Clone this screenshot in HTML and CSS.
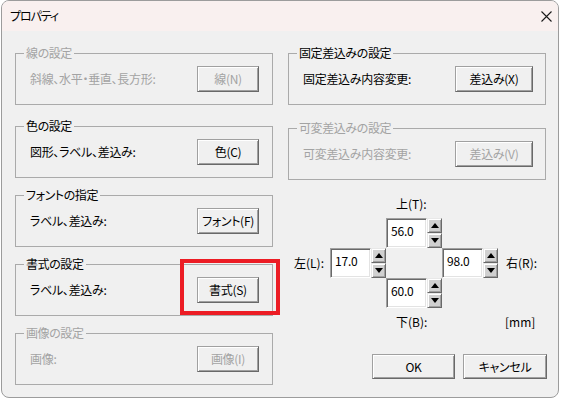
FILE: index.html
```html
<!DOCTYPE html>
<html lang="ja">
<head>
<meta charset="utf-8">
<title>プロパティ</title>
<link rel="stylesheet" href="styles.css">
</head>
<body>
<div class="window">
  <div class="titlebar">
    <span class="title">プロパティ</span>
    <svg class="close" width="11" height="11" viewBox="0 0 11 11"><path d="M0.5 0.5 L10.5 10.5 M10.5 0.5 L0.5 10.5" stroke="#1a1a1a" stroke-width="1.1" fill="none"/></svg>
  </div>
  <div class="content">
    <div class="col col-left">
      <div class="group disabled first">
        <span class="legend">線の設定</span>
        <span class="label">斜線、水平・垂直、長方形:</span>
        <span class="btn">線(N)</span>
      </div>
      <div class="group">
        <span class="legend">色の設定</span>
        <span class="label">図形、ラベル、差込み:</span>
        <span class="btn">色(C)</span>
      </div>
      <div class="group">
        <span class="legend">フォントの指定</span>
        <span class="label">ラベル、差込み:</span>
        <span class="btn">フォント(F)</span>
      </div>
      <div class="group">
        <span class="legend">書式の設定</span>
        <span class="label">ラベル、差込み:</span>
        <span class="btn">書式(S)</span>
        <div class="highlight"></div>
      </div>
      <div class="group disabled">
        <span class="legend">画像の設定</span>
        <span class="label">画像:</span>
        <span class="btn">画像(I)</span>
      </div>
    </div>
    <div class="col col-right">
      <div class="group wide first-right">
        <span class="legend">固定差込みの設定</span>
        <span class="label">固定差込み内容変更:</span>
        <span class="btn btn-wide">差込み(X)</span>
      </div>
      <div class="group wide disabled">
        <span class="legend">可変差込みの設定</span>
        <span class="label">可変差込み内容変更:</span>
        <span class="btn btn-wide">差込み(V)</span>
      </div>
      <div class="margins">
        <span class="m-label m-top">上(T):</span>
        <span class="m-label m-left">左(L):</span>
        <span class="m-label m-right">右(R):</span>
        <span class="m-label m-bottom">下(B):</span>
        <span class="m-label m-unit">[mm]</span>
        <div class="spin cell-top"><span class="spin-value">56.0</span><span class="spin-btns"><span class="spin-b up"></span><span class="spin-b down"></span></span></div>
        <div class="spin cell-left"><span class="spin-value">17.0</span><span class="spin-btns"><span class="spin-b up"></span><span class="spin-b down"></span></span></div>
        <div class="spin cell-right"><span class="spin-value">98.0</span><span class="spin-btns"><span class="spin-b up"></span><span class="spin-b down"></span></span></div>
        <div class="spin cell-bottom"><span class="spin-value">60.0</span><span class="spin-btns"><span class="spin-b up"></span><span class="spin-b down"></span></span></div>
      </div>
      <div class="actions">
        <span class="btn btn-action">OK</span>
        <span class="btn btn-action btn-cancel">キャンセル</span>
      </div>
    </div>
  </div>
</div>
</body>
</html>
```
FILE: styles.css
```css
* { box-sizing: border-box; }
html, body { margin: 0; padding: 0; }
body {
  background: #ffffff;
  font-family: "Noto Sans CJK JP", "Noto Sans", sans-serif;
  font-size: 12px;
  line-height: 16px;
  color: #000;
  font-feature-settings: "palt";
}
.window {
  width: 558px;
  height: 398px;
  margin-left: 1px;
  border: 1px solid #9c9c9c;
  border-radius: 8px;
  background: #f0f0f0;
  overflow: hidden;
  display: flex;
  flex-direction: column;
}
.titlebar {
  height: 30px;
  flex: none;
  background: #f9f0ef;
  display: flex;
  align-items: center;
  justify-content: space-between;
  padding: 0 6px 0 8px;
}
.title { letter-spacing: -1.1px; }
.close { display: block; }
.content {
  display: grid;
  grid-template-columns: 258px 258px;
  column-gap: 15px;
  padding: 22px 0 0 13px;
}
.col { display: flex; flex-direction: column; }
.col-left { gap: 17px; }
.group.first { margin-bottom: 4px; }
.group {
  position: relative;
  height: 52px;
  border: 1px solid #aaaaaa;
  display: flex;
  align-items: center;
  justify-content: space-between;
  padding: 0 13px 0 14px;
}
.group.wide { padding-right: 12px; }
.group.first-right { margin-bottom: 23px; }
.legend {
  position: absolute;
  left: 8px;
  top: -9px;
  padding: 0 2px;
  background: #f0f0f0;
  letter-spacing: -0.4px;
}
.label { letter-spacing: -0.3px; }
.disabled .legend, .disabled .label, .disabled .btn { color: #a3a3a3; }
.btn {
  width: 62px;
  height: 26px;
  display: flex;
  align-items: center;
  justify-content: center;
  background: #f0f0f0;
  border: 1px solid #a0a0a0;
  border-right-color: #696969;
  border-bottom-color: #696969;
  box-shadow: inset 1px 1px #ffffff, inset -1px -1px #a0a0a0;
  letter-spacing: -0.3px;
}
.btn-wide { width: 78px; }
.highlight {
  position: absolute;
  left: 164px;
  top: -6px;
  width: 100px;
  height: 56px;
  border: 4px solid #ec1c24;
  pointer-events: none;
}
.margins {
  margin-top: 16px;
  padding-left: 6px;
  display: grid;
  grid-template-columns: 36px 56px 56px 56px auto;
  grid-template-rows: 22px 30px 30px 30px 22px;
}
.m-label { align-self: center; }
.m-top { grid-column: 3; grid-row: 1; align-self: start; padding-left: 10px; }
.m-bottom { grid-column: 3; grid-row: 5; align-self: end; padding-left: 10px; }
.m-left { grid-column: 1; grid-row: 3; }
.m-right { grid-column: 5; grid-row: 3; padding-left: 8px; }
.m-unit { grid-column: 5; grid-row: 5; align-self: end; padding-left: 7px; }
.cell-top { grid-column: 3; grid-row: 2; }
.cell-left { grid-column: 2; grid-row: 3; }
.cell-right { grid-column: 4; grid-row: 3; }
.cell-bottom { grid-column: 3; grid-row: 4; }
.spin { display: flex; width: 56px; height: 30px; }
.spin-value {
  width: 41px;
  height: 30px;
  background: #fff;
  border-top: 1px solid #a0a0a0;
  border-left: 1px solid #a0a0a0;
  border-right: 1px solid #ffffff;
  border-bottom: 1px solid #ffffff;
  box-shadow: inset 1px 1px #696969, inset -1px -1px #e3e3e3;
  padding: 4px 0 0 4px;
  letter-spacing: -0.2px;
}
.spin-btns { display: flex; flex-direction: column; width: 15px; }
.spin-b {
  height: 15px;
  background: #d0d0d0;
  border: 1px solid #e8e8e8;
  border-right-color: #696969;
  border-bottom-color: #696969;
  box-shadow: inset 1px 1px #ffffff, inset -1px -1px #a0a0a0;
  display: flex;
  align-items: center;
  justify-content: center;
}
.spin-b::before {
  content: "";
  width: 0;
  height: 0;
  border-left: 4px solid transparent;
  border-right: 4px solid transparent;
}
.spin-b.up::before { border-bottom: 5px solid #000; }
.spin-b.down::before { border-top: 5px solid #000; }
.actions {
  margin-top: 24px;
  display: flex;
  justify-content: flex-end;
  gap: 8px;
  margin-right: -1px;
}
.btn-action { width: 83px; height: 25px; }
.btn-cancel { width: 84px; }
```
